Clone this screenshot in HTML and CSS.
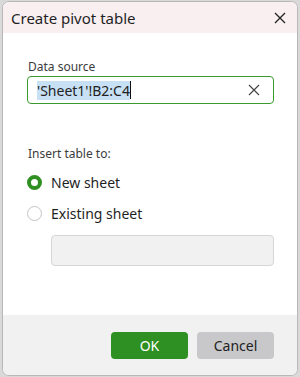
FILE: index.html
```html
<!DOCTYPE html>
<html lang="en">
<head>
    <meta charset="UTF-8" />
    <meta name="viewport" content="width=device-width, initial-scale=1.0" />
    <title>Create pivot table</title>
    <link rel="stylesheet" href="styles.css">
</head>
<body>
    <div class="dialog">
        <div class="titlebar">
            <span class="title">Create pivot table</span>
            <button class="close" aria-label="Close">
                <svg width="12" height="12" viewBox="0 0 12 12"><path d="M1 1L11 11M11 1L1 11" stroke="#222" stroke-width="1.3" fill="none"/></svg>
            </button>
        </div>
        <div class="body">
            <p class="label">Data source</p>
            <div class="source">
                <span class="sel">'Sheet1'!B2:C4</span><span class="caret"></span>
                <svg class="clear" width="12" height="12" viewBox="0 0 12 12"><path d="M1 1L11 11M11 1L1 11" stroke="#444" stroke-width="1.2" fill="none"/></svg>
            </div>
            <p class="label insert">Insert table to:</p>
            <div class="radio">
                <span class="dot on"></span>
                <span>New sheet</span>
            </div>
            <div class="radio">
                <span class="dot"></span>
                <span>Existing sheet</span>
            </div>
            <div class="target"></div>
        </div>
        <div class="footer">
            <button class="ok">OK</button>
            <button class="cancel">Cancel</button>
        </div>
    </div>
</body>
</html>
```

FILE: styles.css
```css
html, body {
    margin: 0;
    padding: 0;
    background: #d9d9d9;
    font-family: "Noto Sans", "Open Sans", sans-serif;
}
.dialog {
    width: 296px;
    height: 375px;
    margin: 1px 0 0 2px;
    box-sizing: border-box;
    border: 1px solid #b8b8b8;
    border-radius: 7px;
    background: #fff;
    overflow: hidden;
    display: flex;
    flex-direction: column;
}
.titlebar {
    height: 31px;
    flex: none;
    background: #f9eff1;
    display: flex;
    align-items: center;
    justify-content: space-between;
    padding: 0 11px 0 8px;
}
.title {
    font-size: 15px;
    color: #1f1f1f;
}
.close {
    border: none;
    background: none;
    padding: 0;
    width: 12px;
    height: 12px;
    display: flex;
}
.body {
    flex: 1;
    padding: 0 23px 0 24px;
}
.label {
    margin: 26px 0 1px 1px;
    font-size: 12px;
    line-height: 16px;
    color: #3c3c3c;
}
.label.insert {
    margin-top: 42px;
    margin-bottom: 5px;
}
.source {
    height: 28px;
    box-sizing: border-box;
    border: 1px solid #3a9a2e;
    border-radius: 4px;
    display: flex;
    align-items: center;
    padding: 0 13px 0 9px;
}
.sel {
    background: #c7e0f4;
    font-size: 14px;
    color: #222;
    line-height: 19px;
}
.caret {
    width: 1px;
    height: 18px;
    background: #111;
}
.clear {
    margin-left: auto;
}
.radio {
    display: flex;
    align-items: center;
    gap: 9px;
    height: 31px;
    font-size: 14px;
    color: #1f1f1f;
}
.dot {
    width: 15px;
    height: 15px;
    box-sizing: border-box;
    border-radius: 50%;
    border: 1px solid #c4c4c4;
}
.dot.on {
    border: 4px solid #2f8f22;
}
.target {
    margin: 6px 0 0 24px;
    height: 31px;
    box-sizing: border-box;
    background: #f1f1f1;
    border: 1px solid #d6d6d6;
    border-radius: 4px;
}
.footer {
    height: 60px;
    flex: none;
    background: #f1f1f1;
    display: flex;
    justify-content: flex-end;
    align-items: center;
    gap: 9px;
    padding: 0 23px 0 0;
}
.footer button {
    width: 77px;
    height: 27px;
    border: none;
    border-radius: 4px;
    font-family: inherit;
    font-size: 14px;
}
.ok {
    background: #2e8f22;
    color: #fff;
}
.cancel {
    background: #c8c8ca;
    color: #222;
}
```
